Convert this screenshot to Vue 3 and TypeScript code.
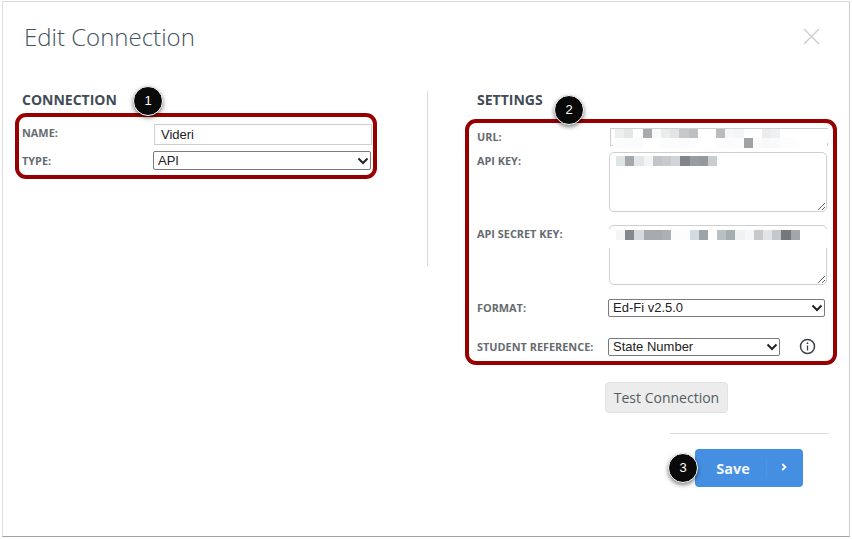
<script setup lang="ts">
const urlRow1: string[] = ['#eceff0', '#e4e6e8', '#ffffff', '#a8abae', '#f8f9f9', '#eaeced', '#e2e4e6', '#c6c9cc', '#bcc0c3', '#ffffff', '#ffffff', '#b8bcbf', '#f6f7f7', '#f4f5f6', '#ffffff', '#ffffff', '#ebeced', '#eff0f1']
const urlRow2: string[] = ['#fcfcfc', '#fafbfb', '#fbfbfc', '#ffffff', '#ffffff', '#fcfcfc', '#fcfcfc', '#fbfbfb', '#fdfdfd', '#ffffff', '#ffffff', '#fcfcfc', '#fbfbfb', '#fcfcfc', '#a0a2a4', '#fbfbfb', '#f9f9fa', '#f9fafa', '#fcfcfc', '#fdfdfd']
const keyRow: string[] = ['#dfe4e7', '#a3a8ad', '#e3e7e9', '#f2f4f5', '#c2c6c9', '#c8cbce', '#d2d5d7', '#80868c', '#989da2', '#94999e', '#c8cdd0']
const secretRow: string[] = ['#f3f5f7', '#83888c', '#d5dadb', '#a7abaf', '#a7abaf', '#acb0b3', '#fbfcfd', '#fdfdfe', '#d3dbe0', '#9da3a8', '#fdfdfd', '#b9c0c3', '#a6acb0', '#eff1f3', '#f6f7f8', '#c6cacc', '#e2e4e6', '#c3c8cb', '#73787d', '#a3a7aa']
</script>

<template>
  <div class="page">
    <div class="modal">
      <header class="head">
        <h1 class="title">Edit Connection</h1>
        <svg class="close" width="19" height="19" viewBox="0 0 19 19" aria-label="Close">
          <path d="M2 2 L17 17 M17 2 L2 17" stroke="#cfd2d4" stroke-width="1.6" fill="none" />
        </svg>
      </header>

      <div class="body">
        <section class="left">
          <h2 class="section">CONNECTION</h2>
          <div class="group group-a">
            <span class="badge badge-1">1</span>
            <div class="row-a">
              <label class="lbl lbl-name">NAME:</label>
              <input class="name-input" type="text" value="Videri" />
            </div>
            <div class="row-a row-type">
              <label class="lbl">TYPE:</label>
              <div class="select-wrap type-select">
                <select class="sel"><option>API</option></select>
                <svg class="chev" width="12" height="8" viewBox="0 0 12 8"><path d="M1.5 1.5 L6 6 L10.500 1.500" stroke="#222" stroke-width="2" fill="none" /></svg>
              </div>
            </div>
          </div>
        </section>

        <div class="vline"></div>

        <section class="right">
          <h2 class="section section-settings">SETTINGS</h2>
          <div class="group group-b">
            <span class="badge badge-2">2</span>

            <div class="row-b row-url">
              <label class="lbl">URL:</label>
              <div class="field field-url">
                <input class="url-input" type="text" />
                <div class="mosaic mosaic-url">
                  <div class="cells">
                    <i v-for="(c, i) in urlRow1" :key="i" class="cell" :style="{ background: c }"></i>
                  </div>
                  <div class="cells">
                    <i v-for="(c, i) in urlRow2" :key="i" class="cell" :style="{ background: c }"></i>
                  </div>
                </div>
              </div>
            </div>

            <div class="row-b row-top row-key">
              <label class="lbl">API KEY:</label>
              <div class="field field-area">
                <textarea class="area"></textarea>
                <div class="mosaic mosaic-key">
                  <div class="cells">
                    <i v-for="(c, i) in keyRow" :key="i" class="cell" :style="{ background: c }"></i>
                  </div>
                </div>
              </div>
            </div>

            <div class="row-b row-top row-secret">
              <label class="lbl">API SECRET KEY:</label>
              <div class="field field-area">
                <textarea class="area"></textarea>
                <div class="mosaic mosaic-secret">
                  <div class="cells">
                    <i v-for="(c, i) in secretRow" :key="i" class="cell" :style="{ background: c }"></i>
                  </div>
                </div>
              </div>
            </div>

            <div class="row-b row-format">
              <label class="lbl">FORMAT:</label>
              <div class="select-wrap format-select">
                <select class="sel sel-raised"><option>Ed-Fi v2.5.0</option></select>
                <svg class="chev" width="12" height="8" viewBox="0 0 12 8"><path d="M1.5 1.5 L6 6 L10.500 1.500" stroke="#222" stroke-width="2" fill="none" /></svg>
              </div>
            </div>

            <div class="row-b row-student">
              <label class="lbl">STUDENT REFERENCE:</label>
              <div class="select-wrap student-select">
                <select class="sel sel-raised"><option>State Number</option></select>
                <svg class="chev" width="12" height="8" viewBox="0 0 12 8"><path d="M1.5 1.5 L6 6 L10.500 1.500" stroke="#222" stroke-width="2" fill="none" /></svg>
              </div>
              <svg class="info" width="17" height="17" viewBox="0 0 17 17">
                <circle cx="8.500" cy="8.500" r="7" stroke="#3a424a" stroke-width="1.500" fill="none" />
                <circle cx="8.500" cy="5.200" r="0.900" fill="#3a424a" />
                <path d="M8.500 7.500 V12.500" stroke="#3a424a" stroke-width="1.300" />
              </svg>
            </div>
          </div>

          <button class="test" type="button">Test Connection</button>
          <div class="hline"></div>
          <div class="save-wrap">
            <span class="badge badge-3">3</span>
            <button class="save" type="button">
              <span class="save-text">Save</span>
              <span class="save-arrow">
                <svg width="6" height="8" viewBox="0 0 6 8"><path d="M1.200 1 L4.400 4 L1.200 7" stroke="#fff" stroke-width="1.800" fill="none" /></svg>
              </span>
            </button>
          </div>
        </section>
      </div>
    </div>
  </div>
</template>

<style>
html, body { margin: 0; padding: 0; background: #fff; }
</style>

<style scoped>
.page {
  width: 852px;
  height: 539px;
  box-sizing: border-box;
  padding: 1px 2px 2px;
  overflow: hidden;
  background: #fff;
  font-family: "Open Sans", sans-serif;
}
.modal {
  height: 536px;
  box-sizing: border-box;
  border: 1px solid #dcdcdc;
  border-bottom-color: #a2a2a2;
  border-right-color: #cfcfcf;
  background: #fff;
}
.head {
  height: 89px;
  box-sizing: border-box;
  padding: 18px 28px 0 21px;
  display: flex;
  justify-content: space-between;
  align-items: flex-start;
}
.title {
  margin: 0;
  font-size: 24px;
  line-height: 33px;
  font-weight: 300;
  color: #46525c;
}
.close { margin-top: 7px; }
.body {
  display: flex;
  align-items: flex-start;
  padding-left: 12px;
}
.left { width: 362px; }
.section {
  margin: 0 0 4px;
  padding-left: 7px;
  font-size: 14px;
  line-height: 18px;
  font-weight: 700;
  color: #414c56;
}
.section-settings {
  margin-bottom: 10px;
  padding-left: 12px;
}
.vline {
  width: 1px;
  height: 175px;
  margin: 0 37px 0 50px;
  background: #dadada;
}
.right { width: 372px; }
.group {
  position: relative;
  box-sizing: border-box;
  border: 4px solid #960000;
  border-radius: 11px;
  background: #fff;
}
.group-a {
  width: 362px;
  height: 66px;
  padding: 7px 1px 0 3px;
}
.group-b {
  width: 372px;
  height: 246px;
  padding: 5px 0 0 8px;
}
.lbl {
  font-size: 10.900px;
  line-height: 12px;
  font-weight: 700;
  color: #666b70;
  white-space: nowrap;
}
.lbl-name {
  align-self: start;
  padding-top: 3px;
}
.row-a {
  display: grid;
  grid-template-columns: 132px 218px;
  align-items: center;
  height: 21px;
}
.row-type {
  height: 19px;
  margin-top: 6px;
}
.name-input {
  width: 218px;
  height: 21px;
  box-sizing: border-box;
  padding: 0 6px;
  border: 1px solid #cfcfcf;
  background: #fff;
  font: 13px "Liberation Sans", sans-serif;
  color: #222;
  outline: none;
}
.select-wrap { position: relative; }
.type-select { margin-left: -1px; width: 218px; height: 19px; }
.format-select { width: 217px; height: 18px; }
.student-select { width: 172px; height: 18px; }
.sel {
  display: block;
  width: 100%;
  height: 100%;
  box-sizing: border-box;
  margin: 0;
  padding: 0 0 0 4px;
  border: 1px solid #7b7b7b;
  border-radius: 2px;
  background: #fff;
  appearance: none;
  font: 13px "Liberation Sans", sans-serif;
  color: #222;
  outline: none;
}
.sel-raised { padding-bottom: 2px; }
.chev {
  position: absolute;
  right: 2px;
  top: 50%;
  margin-top: -4px;
  pointer-events: none;
}
.row-b {
  display: grid;
  grid-template-columns: 131px auto 1fr;
  align-items: center;
}
.row-top { align-items: start; }
.row-top .lbl { padding-top: 3px; }
.row-url { height: 18px; }
.row-key { margin-top: 6px; height: 60px; }
.row-secret { margin-top: 13px; height: 60px; }
.row-format { margin-top: 14px; height: 18px; }
.row-student { margin-top: 21px; height: 18px; }
.field { position: relative; }
.field-url { margin-left: 2px; width: 218px; height: 18px; }
.field-area { margin-left: 1px; width: 218px; height: 60px; }
.url-input {
  display: block;
  width: 218px;
  height: 18px;
  box-sizing: border-box;
  border: 1px solid #cfcfcf;
  background: #fff;
  outline: none;
  padding: 0;
}
.area {
  display: block;
  width: 218px;
  height: 60px;
  box-sizing: border-box;
  margin: 0;
  padding: 0;
  border: 1px solid #cfcfcf;
  border-radius: 5px;
  background: #fff;
  outline: none;
  resize: vertical;
}
.mosaic {
  position: absolute;
  display: flex;
  flex-direction: column;
}
.mosaic-url {
  left: 1px;
  top: 1px;
  width: 218px;
  height: 14px;
  box-sizing: border-box;
  padding: 0 0 0 4px;
  background: #fff;
}
.mosaic-url::before {
  content: "";
  position: absolute;
  left: 2px;
  top: 13px;
  width: 214px;
  height: 5px;
  background: #fff;
}
.mosaic-url .cells { position: relative; height: 9px; }
.mosaic-key {
  left: 7px;
  top: 4px;
}
.mosaic-secret {
  left: -1px;
  top: 4px;
  width: 221px;
  height: 19px;
  box-sizing: border-box;
  padding: 1px 0 0 8px;
  background: #fff;
}
.cells { display: flex; }
.cell {
  display: block;
  flex: 0 0 9.200px;
  height: 9.500px;
}
.info { margin-left: 19px; margin-top: -1px; }
.test {
  display: block;
  width: 123px;
  height: 31px;
  margin: 17px 0 0 140px;
  padding: 0;
  box-sizing: border-box;
  border: 1px solid #e2e2e2;
  border-radius: 4px;
  background: #ececec;
  font: 400 14px "Open Sans", sans-serif;
  color: #535c64;
}
.hline {
  width: 159px;
  height: 1px;
  margin: 20px 0 0 205px;
  background: #dedede;
}
.save-wrap {
  position: relative;
  width: 108px;
  height: 38px;
  margin: 15px 0 0 230px;
}
.save {
  display: flex;
  align-items: center;
  width: 108px;
  height: 38px;
  padding: 0;
  box-sizing: border-box;
  border: none;
  border-radius: 4px;
  background: #458fe2;
  color: #fff;
}
.save-text {
  width: 71px;
  padding-left: 5px;
  box-sizing: border-box;
  text-align: center;
  font: 700 14.500px "Open Sans", sans-serif;
  color: #f2f7fd;
}
.save-arrow {
  flex: 1;
  height: 20px;
  border-left: 1px solid #4e95e5;
  display: flex;
  align-items: center;
  justify-content: center;
  padding-right: 3px;
  padding-bottom: 2px;
  box-sizing: border-box;
}
.badge {
  position: absolute;
  z-index: 2;
  width: 30px;
  height: 30px;
  box-sizing: border-box;
  border: 1px solid #fff;
  border-radius: 50%;
  background: #0a0a0a;
  box-shadow: 0 2px 4px rgba(0, 0, 0, 0.5);
  color: #fff;
  font: 13px/28px "Liberation Sans", sans-serif;
  text-align: center;
}
.badge-1 { left: 114px; top: -31px; }
.badge-2 { left: 85px; top: -28px; }
.badge-3 { left: -27px; top: 4px; }
</style>
